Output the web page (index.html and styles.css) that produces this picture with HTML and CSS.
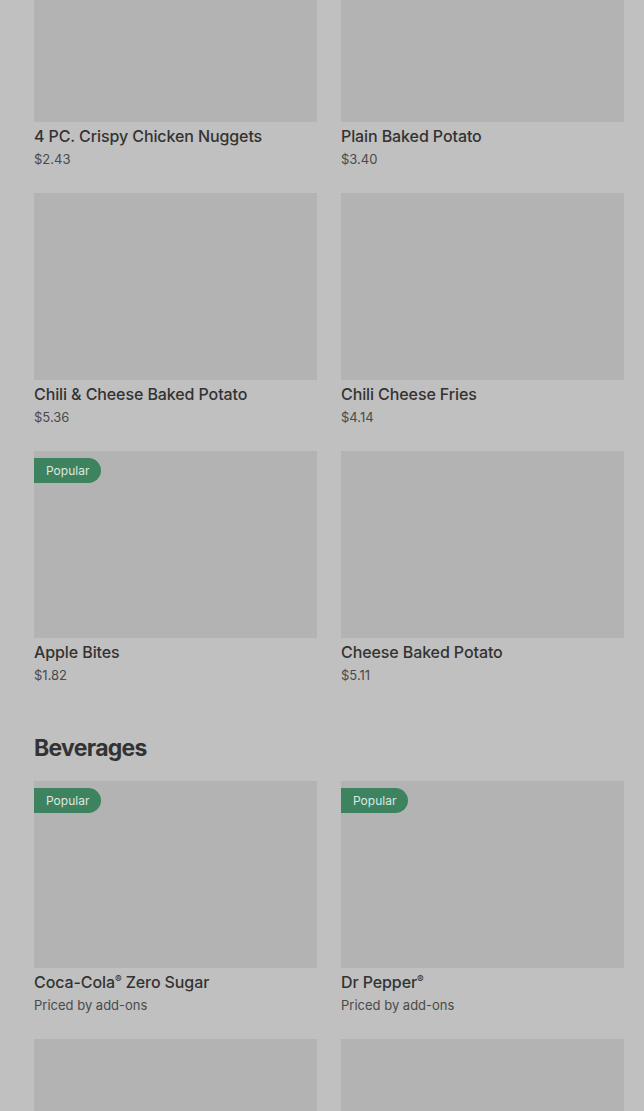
FILE: index.html
```html
<!DOCTYPE html>
<html>
<head>
<meta charset="utf-8">
<link rel="stylesheet" href="styles.css">
</head>
<body>
<main class="page">
  <section class="grid grid-first">
    <div class="item"><div class="thumb"></div><div class="name">4 PC. Crispy Chicken Nuggets</div><div class="price">$2.43</div></div>
    <div class="item"><div class="thumb"></div><div class="name">Plain Baked Potato</div><div class="price">$3.40</div></div>
    <div class="item"><div class="thumb"></div><div class="name">Chili &amp; Cheese Baked Potato</div><div class="price">$5.36</div></div>
    <div class="item"><div class="thumb"></div><div class="name">Chili Cheese Fries</div><div class="price">$4.14</div></div>
    <div class="item"><div class="thumb"><span class="badge">Popular</span></div><div class="name">Apple Bites</div><div class="price">$1.82</div></div>
    <div class="item"><div class="thumb"></div><div class="name">Cheese Baked Potato</div><div class="price">$5.11</div></div>
  </section>
  <h2 class="section-title">Beverages</h2>
  <section class="grid">
    <div class="item"><div class="thumb"><span class="badge">Popular</span></div><div class="name">Coca-Cola<span class="reg">®</span> Zero Sugar</div><div class="price">Priced by add-ons</div></div>
    <div class="item"><div class="thumb"><span class="badge">Popular</span></div><div class="name">Dr Pepper<span class="reg">®</span></div><div class="price">Priced by add-ons</div></div>
    <div class="item"><div class="thumb"></div><div class="name"></div><div class="price"></div></div>
    <div class="item"><div class="thumb"></div><div class="name"></div><div class="price"></div></div>
  </section>
</main>
</body>
</html>
```
FILE: styles.css
```css
html, body {
  margin: 0;
  padding: 0;
  background: #c0c0c0;
  overflow: hidden;
}
body {
  font-family: Inter, "Noto Sans", sans-serif;
  color: #333333;
}
.page {
  padding: 0 20px 0 34px;
  height: 1111px;
  overflow: hidden;
}
.grid {
  display: grid;
  grid-template-columns: 283px 283px;
  column-gap: 24px;
  row-gap: 25px;
}
.grid-first {
  margin-top: -65px;
}
.item {
  display: flex;
  flex-direction: column;
}
.thumb {
  position: relative;
  height: 187px;
  background: #b3b3b3;
}
.badge {
  position: absolute;
  left: 0;
  top: 7px;
  height: 25px;
  padding: 0 12px;
  display: flex;
  align-items: center;
  background: #3e8360;
  color: #dde8e1;
  font-size: 12px;
  border-radius: 0 13px 13px 0;
}
.name {
  margin-top: 4px;
  font-size: 16px;
  line-height: 20px;
  font-weight: 500;
  color: #333333;
  letter-spacing: -0.1px;
}
.reg {
  font-size: 10px;
  vertical-align: 5px;
  line-height: 0;
}
.price {
  margin-top: 4px;
  font-size: 13px;
  line-height: 18px;
  color: #4a4a4a;
}
.section-title {
  margin: 49px 0 18px;
  font-size: 23px;
  line-height: 30px;
  font-weight: 700;
  color: #333333;
  letter-spacing: -0.7px;
}
```
